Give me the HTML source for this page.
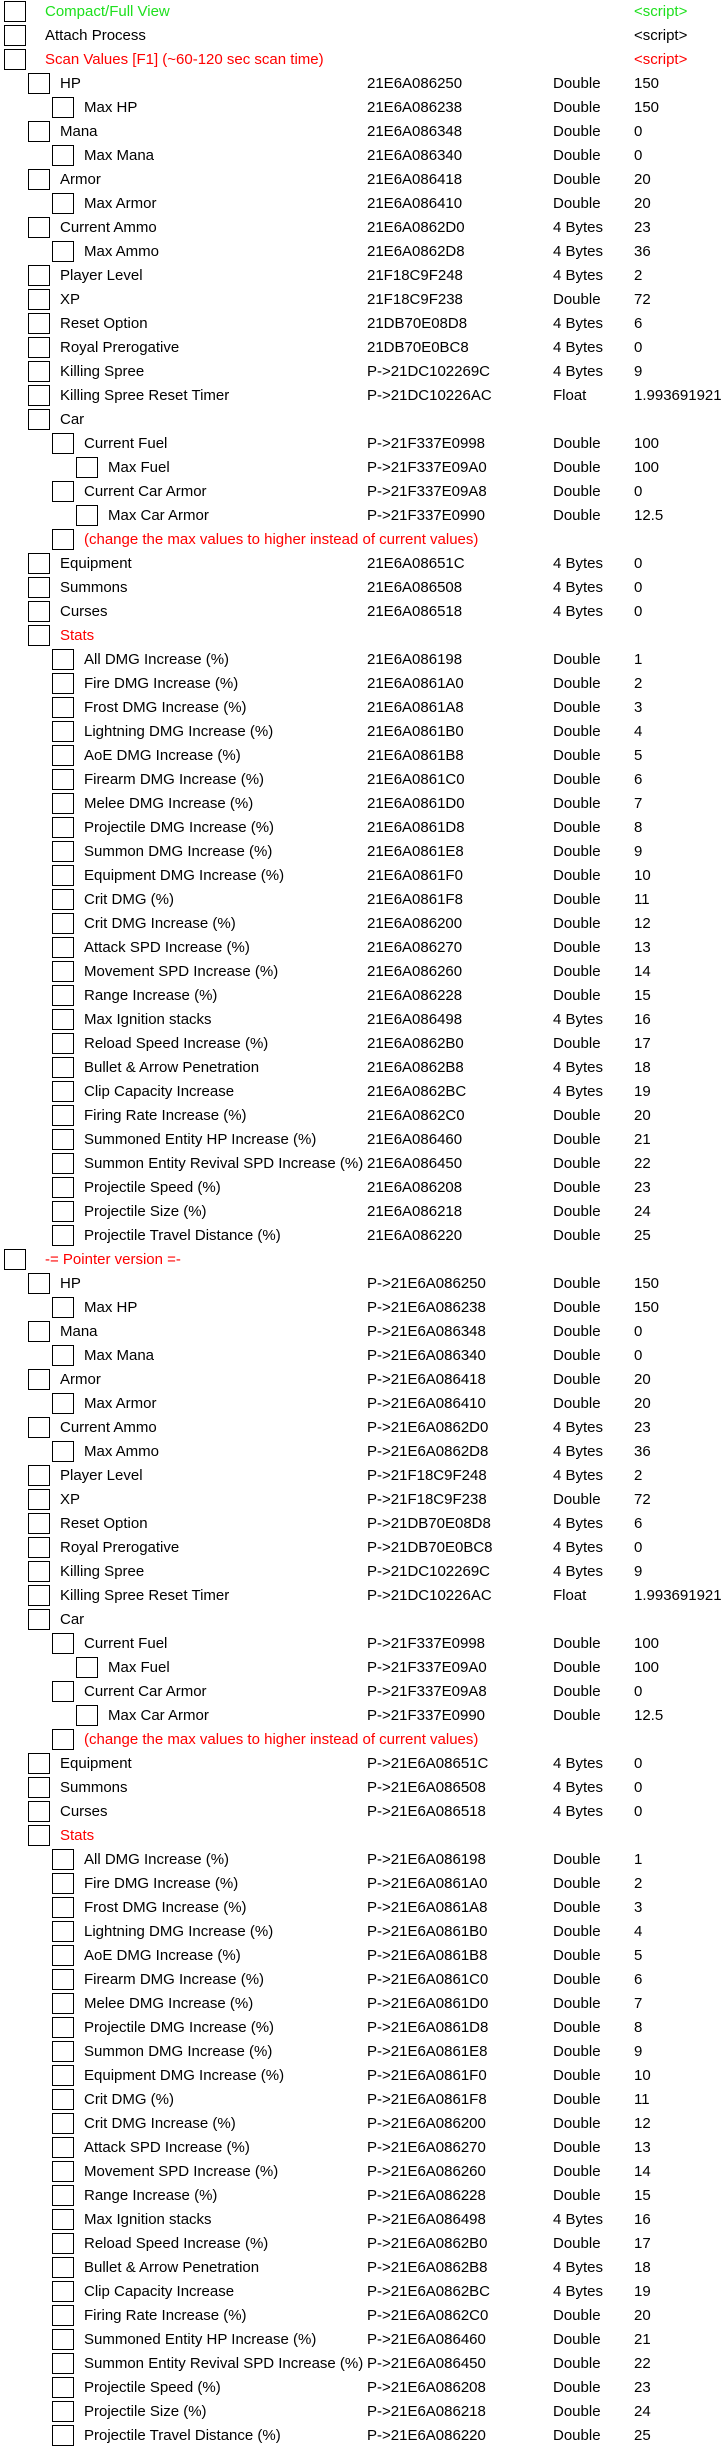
<!DOCTYPE html>
<html><head><meta charset="utf-8"><style>
html,body{margin:0;padding:0;background:#fff;}
body{width:722px;height:2448px;overflow:hidden;font-family:"Liberation Sans",Arial,sans-serif;font-size:15px;color:#000;}
.r{position:relative;height:24px;line-height:24px;white-space:nowrap;}
.r i{position:absolute;top:1px;width:22px;height:21px;box-sizing:border-box;border:1px solid #000;background:#fff;}
.r b{position:absolute;font-weight:normal;top:0;}
.r .a{position:absolute;left:367px;top:0;}
.r .t{position:absolute;left:553px;top:0;}
.r .v{position:absolute;left:634px;top:0;}
.l0 i{left:4px}.l0 b{left:45px}
.l1 i{left:28px}.l1 b{left:60px}
.l2 i{left:52px}.l2 b{left:84px}
.l3 i{left:76px}.l3 b{left:108px}
.g{color:#1ee01e}.red{color:#ff0000}
</style></head><body>
<div class="r l0 g"><i></i><b>Compact/Full View</b><span class="v">&lt;script&gt;</span></div>
<div class="r l0"><i></i><b>Attach Process</b><span class="v">&lt;script&gt;</span></div>
<div class="r l0 red"><i></i><b>Scan Values [F1] (~60-120 sec scan time)</b><span class="v">&lt;script&gt;</span></div>
<div class="r l1"><i></i><b>HP</b><span class="a">21E6A086250</span><span class="t">Double</span><span class="v">150</span></div>
<div class="r l2"><i></i><b>Max HP</b><span class="a">21E6A086238</span><span class="t">Double</span><span class="v">150</span></div>
<div class="r l1"><i></i><b>Mana</b><span class="a">21E6A086348</span><span class="t">Double</span><span class="v">0</span></div>
<div class="r l2"><i></i><b>Max Mana</b><span class="a">21E6A086340</span><span class="t">Double</span><span class="v">0</span></div>
<div class="r l1"><i></i><b>Armor</b><span class="a">21E6A086418</span><span class="t">Double</span><span class="v">20</span></div>
<div class="r l2"><i></i><b>Max Armor</b><span class="a">21E6A086410</span><span class="t">Double</span><span class="v">20</span></div>
<div class="r l1"><i></i><b>Current Ammo</b><span class="a">21E6A0862D0</span><span class="t">4 Bytes</span><span class="v">23</span></div>
<div class="r l2"><i></i><b>Max Ammo</b><span class="a">21E6A0862D8</span><span class="t">4 Bytes</span><span class="v">36</span></div>
<div class="r l1"><i></i><b>Player Level</b><span class="a">21F18C9F248</span><span class="t">4 Bytes</span><span class="v">2</span></div>
<div class="r l1"><i></i><b>XP</b><span class="a">21F18C9F238</span><span class="t">Double</span><span class="v">72</span></div>
<div class="r l1"><i></i><b>Reset Option</b><span class="a">21DB70E08D8</span><span class="t">4 Bytes</span><span class="v">6</span></div>
<div class="r l1"><i></i><b>Royal Prerogative</b><span class="a">21DB70E0BC8</span><span class="t">4 Bytes</span><span class="v">0</span></div>
<div class="r l1"><i></i><b>Killing Spree</b><span class="a">P-&gt;21DC102269C</span><span class="t">4 Bytes</span><span class="v">9</span></div>
<div class="r l1"><i></i><b>Killing Spree Reset Timer</b><span class="a">P-&gt;21DC10226AC</span><span class="t">Float</span><span class="v">1.993691921</span></div>
<div class="r l1"><i></i><b>Car</b></div>
<div class="r l2"><i></i><b>Current Fuel</b><span class="a">P-&gt;21F337E0998</span><span class="t">Double</span><span class="v">100</span></div>
<div class="r l3"><i></i><b>Max Fuel</b><span class="a">P-&gt;21F337E09A0</span><span class="t">Double</span><span class="v">100</span></div>
<div class="r l2"><i></i><b>Current Car Armor</b><span class="a">P-&gt;21F337E09A8</span><span class="t">Double</span><span class="v">0</span></div>
<div class="r l3"><i></i><b>Max Car Armor</b><span class="a">P-&gt;21F337E0990</span><span class="t">Double</span><span class="v">12.5</span></div>
<div class="r l2 red"><i></i><b>(change the max values to higher instead of current values)</b></div>
<div class="r l1"><i></i><b>Equipment</b><span class="a">21E6A08651C</span><span class="t">4 Bytes</span><span class="v">0</span></div>
<div class="r l1"><i></i><b>Summons</b><span class="a">21E6A086508</span><span class="t">4 Bytes</span><span class="v">0</span></div>
<div class="r l1"><i></i><b>Curses</b><span class="a">21E6A086518</span><span class="t">4 Bytes</span><span class="v">0</span></div>
<div class="r l1 red"><i></i><b>Stats</b></div>
<div class="r l2"><i></i><b>All DMG Increase (%)</b><span class="a">21E6A086198</span><span class="t">Double</span><span class="v">1</span></div>
<div class="r l2"><i></i><b>Fire DMG Increase (%)</b><span class="a">21E6A0861A0</span><span class="t">Double</span><span class="v">2</span></div>
<div class="r l2"><i></i><b>Frost DMG Increase (%)</b><span class="a">21E6A0861A8</span><span class="t">Double</span><span class="v">3</span></div>
<div class="r l2"><i></i><b>Lightning DMG Increase (%)</b><span class="a">21E6A0861B0</span><span class="t">Double</span><span class="v">4</span></div>
<div class="r l2"><i></i><b>AoE DMG Increase (%)</b><span class="a">21E6A0861B8</span><span class="t">Double</span><span class="v">5</span></div>
<div class="r l2"><i></i><b>Firearm DMG Increase (%)</b><span class="a">21E6A0861C0</span><span class="t">Double</span><span class="v">6</span></div>
<div class="r l2"><i></i><b>Melee DMG Increase (%)</b><span class="a">21E6A0861D0</span><span class="t">Double</span><span class="v">7</span></div>
<div class="r l2"><i></i><b>Projectile DMG Increase (%)</b><span class="a">21E6A0861D8</span><span class="t">Double</span><span class="v">8</span></div>
<div class="r l2"><i></i><b>Summon DMG Increase (%)</b><span class="a">21E6A0861E8</span><span class="t">Double</span><span class="v">9</span></div>
<div class="r l2"><i></i><b>Equipment DMG Increase (%)</b><span class="a">21E6A0861F0</span><span class="t">Double</span><span class="v">10</span></div>
<div class="r l2"><i></i><b>Crit DMG (%)</b><span class="a">21E6A0861F8</span><span class="t">Double</span><span class="v">11</span></div>
<div class="r l2"><i></i><b>Crit DMG Increase (%)</b><span class="a">21E6A086200</span><span class="t">Double</span><span class="v">12</span></div>
<div class="r l2"><i></i><b>Attack SPD Increase (%)</b><span class="a">21E6A086270</span><span class="t">Double</span><span class="v">13</span></div>
<div class="r l2"><i></i><b>Movement SPD Increase (%)</b><span class="a">21E6A086260</span><span class="t">Double</span><span class="v">14</span></div>
<div class="r l2"><i></i><b>Range Increase (%)</b><span class="a">21E6A086228</span><span class="t">Double</span><span class="v">15</span></div>
<div class="r l2"><i></i><b>Max Ignition stacks</b><span class="a">21E6A086498</span><span class="t">4 Bytes</span><span class="v">16</span></div>
<div class="r l2"><i></i><b>Reload Speed Increase (%)</b><span class="a">21E6A0862B0</span><span class="t">Double</span><span class="v">17</span></div>
<div class="r l2"><i></i><b>Bullet &amp; Arrow Penetration</b><span class="a">21E6A0862B8</span><span class="t">4 Bytes</span><span class="v">18</span></div>
<div class="r l2"><i></i><b>Clip Capacity Increase</b><span class="a">21E6A0862BC</span><span class="t">4 Bytes</span><span class="v">19</span></div>
<div class="r l2"><i></i><b>Firing Rate Increase (%)</b><span class="a">21E6A0862C0</span><span class="t">Double</span><span class="v">20</span></div>
<div class="r l2"><i></i><b>Summoned Entity HP Increase (%)</b><span class="a">21E6A086460</span><span class="t">Double</span><span class="v">21</span></div>
<div class="r l2"><i></i><b>Summon Entity Revival SPD Increase (%)</b><span class="a">21E6A086450</span><span class="t">Double</span><span class="v">22</span></div>
<div class="r l2"><i></i><b>Projectile Speed (%)</b><span class="a">21E6A086208</span><span class="t">Double</span><span class="v">23</span></div>
<div class="r l2"><i></i><b>Projectile Size (%)</b><span class="a">21E6A086218</span><span class="t">Double</span><span class="v">24</span></div>
<div class="r l2"><i></i><b>Projectile Travel Distance (%)</b><span class="a">21E6A086220</span><span class="t">Double</span><span class="v">25</span></div>
<div class="r l0 red"><i></i><b>-= Pointer version =-</b></div>
<div class="r l1"><i></i><b>HP</b><span class="a">P-&gt;21E6A086250</span><span class="t">Double</span><span class="v">150</span></div>
<div class="r l2"><i></i><b>Max HP</b><span class="a">P-&gt;21E6A086238</span><span class="t">Double</span><span class="v">150</span></div>
<div class="r l1"><i></i><b>Mana</b><span class="a">P-&gt;21E6A086348</span><span class="t">Double</span><span class="v">0</span></div>
<div class="r l2"><i></i><b>Max Mana</b><span class="a">P-&gt;21E6A086340</span><span class="t">Double</span><span class="v">0</span></div>
<div class="r l1"><i></i><b>Armor</b><span class="a">P-&gt;21E6A086418</span><span class="t">Double</span><span class="v">20</span></div>
<div class="r l2"><i></i><b>Max Armor</b><span class="a">P-&gt;21E6A086410</span><span class="t">Double</span><span class="v">20</span></div>
<div class="r l1"><i></i><b>Current Ammo</b><span class="a">P-&gt;21E6A0862D0</span><span class="t">4 Bytes</span><span class="v">23</span></div>
<div class="r l2"><i></i><b>Max Ammo</b><span class="a">P-&gt;21E6A0862D8</span><span class="t">4 Bytes</span><span class="v">36</span></div>
<div class="r l1"><i></i><b>Player Level</b><span class="a">P-&gt;21F18C9F248</span><span class="t">4 Bytes</span><span class="v">2</span></div>
<div class="r l1"><i></i><b>XP</b><span class="a">P-&gt;21F18C9F238</span><span class="t">Double</span><span class="v">72</span></div>
<div class="r l1"><i></i><b>Reset Option</b><span class="a">P-&gt;21DB70E08D8</span><span class="t">4 Bytes</span><span class="v">6</span></div>
<div class="r l1"><i></i><b>Royal Prerogative</b><span class="a">P-&gt;21DB70E0BC8</span><span class="t">4 Bytes</span><span class="v">0</span></div>
<div class="r l1"><i></i><b>Killing Spree</b><span class="a">P-&gt;21DC102269C</span><span class="t">4 Bytes</span><span class="v">9</span></div>
<div class="r l1"><i></i><b>Killing Spree Reset Timer</b><span class="a">P-&gt;21DC10226AC</span><span class="t">Float</span><span class="v">1.993691921</span></div>
<div class="r l1"><i></i><b>Car</b></div>
<div class="r l2"><i></i><b>Current Fuel</b><span class="a">P-&gt;21F337E0998</span><span class="t">Double</span><span class="v">100</span></div>
<div class="r l3"><i></i><b>Max Fuel</b><span class="a">P-&gt;21F337E09A0</span><span class="t">Double</span><span class="v">100</span></div>
<div class="r l2"><i></i><b>Current Car Armor</b><span class="a">P-&gt;21F337E09A8</span><span class="t">Double</span><span class="v">0</span></div>
<div class="r l3"><i></i><b>Max Car Armor</b><span class="a">P-&gt;21F337E0990</span><span class="t">Double</span><span class="v">12.5</span></div>
<div class="r l2 red"><i></i><b>(change the max values to higher instead of current values)</b></div>
<div class="r l1"><i></i><b>Equipment</b><span class="a">P-&gt;21E6A08651C</span><span class="t">4 Bytes</span><span class="v">0</span></div>
<div class="r l1"><i></i><b>Summons</b><span class="a">P-&gt;21E6A086508</span><span class="t">4 Bytes</span><span class="v">0</span></div>
<div class="r l1"><i></i><b>Curses</b><span class="a">P-&gt;21E6A086518</span><span class="t">4 Bytes</span><span class="v">0</span></div>
<div class="r l1 red"><i></i><b>Stats</b></div>
<div class="r l2"><i></i><b>All DMG Increase (%)</b><span class="a">P-&gt;21E6A086198</span><span class="t">Double</span><span class="v">1</span></div>
<div class="r l2"><i></i><b>Fire DMG Increase (%)</b><span class="a">P-&gt;21E6A0861A0</span><span class="t">Double</span><span class="v">2</span></div>
<div class="r l2"><i></i><b>Frost DMG Increase (%)</b><span class="a">P-&gt;21E6A0861A8</span><span class="t">Double</span><span class="v">3</span></div>
<div class="r l2"><i></i><b>Lightning DMG Increase (%)</b><span class="a">P-&gt;21E6A0861B0</span><span class="t">Double</span><span class="v">4</span></div>
<div class="r l2"><i></i><b>AoE DMG Increase (%)</b><span class="a">P-&gt;21E6A0861B8</span><span class="t">Double</span><span class="v">5</span></div>
<div class="r l2"><i></i><b>Firearm DMG Increase (%)</b><span class="a">P-&gt;21E6A0861C0</span><span class="t">Double</span><span class="v">6</span></div>
<div class="r l2"><i></i><b>Melee DMG Increase (%)</b><span class="a">P-&gt;21E6A0861D0</span><span class="t">Double</span><span class="v">7</span></div>
<div class="r l2"><i></i><b>Projectile DMG Increase (%)</b><span class="a">P-&gt;21E6A0861D8</span><span class="t">Double</span><span class="v">8</span></div>
<div class="r l2"><i></i><b>Summon DMG Increase (%)</b><span class="a">P-&gt;21E6A0861E8</span><span class="t">Double</span><span class="v">9</span></div>
<div class="r l2"><i></i><b>Equipment DMG Increase (%)</b><span class="a">P-&gt;21E6A0861F0</span><span class="t">Double</span><span class="v">10</span></div>
<div class="r l2"><i></i><b>Crit DMG (%)</b><span class="a">P-&gt;21E6A0861F8</span><span class="t">Double</span><span class="v">11</span></div>
<div class="r l2"><i></i><b>Crit DMG Increase (%)</b><span class="a">P-&gt;21E6A086200</span><span class="t">Double</span><span class="v">12</span></div>
<div class="r l2"><i></i><b>Attack SPD Increase (%)</b><span class="a">P-&gt;21E6A086270</span><span class="t">Double</span><span class="v">13</span></div>
<div class="r l2"><i></i><b>Movement SPD Increase (%)</b><span class="a">P-&gt;21E6A086260</span><span class="t">Double</span><span class="v">14</span></div>
<div class="r l2"><i></i><b>Range Increase (%)</b><span class="a">P-&gt;21E6A086228</span><span class="t">Double</span><span class="v">15</span></div>
<div class="r l2"><i></i><b>Max Ignition stacks</b><span class="a">P-&gt;21E6A086498</span><span class="t">4 Bytes</span><span class="v">16</span></div>
<div class="r l2"><i></i><b>Reload Speed Increase (%)</b><span class="a">P-&gt;21E6A0862B0</span><span class="t">Double</span><span class="v">17</span></div>
<div class="r l2"><i></i><b>Bullet &amp; Arrow Penetration</b><span class="a">P-&gt;21E6A0862B8</span><span class="t">4 Bytes</span><span class="v">18</span></div>
<div class="r l2"><i></i><b>Clip Capacity Increase</b><span class="a">P-&gt;21E6A0862BC</span><span class="t">4 Bytes</span><span class="v">19</span></div>
<div class="r l2"><i></i><b>Firing Rate Increase (%)</b><span class="a">P-&gt;21E6A0862C0</span><span class="t">Double</span><span class="v">20</span></div>
<div class="r l2"><i></i><b>Summoned Entity HP Increase (%)</b><span class="a">P-&gt;21E6A086460</span><span class="t">Double</span><span class="v">21</span></div>
<div class="r l2"><i></i><b>Summon Entity Revival SPD Increase (%)</b><span class="a">P-&gt;21E6A086450</span><span class="t">Double</span><span class="v">22</span></div>
<div class="r l2"><i></i><b>Projectile Speed (%)</b><span class="a">P-&gt;21E6A086208</span><span class="t">Double</span><span class="v">23</span></div>
<div class="r l2"><i></i><b>Projectile Size (%)</b><span class="a">P-&gt;21E6A086218</span><span class="t">Double</span><span class="v">24</span></div>
<div class="r l2"><i></i><b>Projectile Travel Distance (%)</b><span class="a">P-&gt;21E6A086220</span><span class="t">Double</span><span class="v">25</span></div>
</body></html>
